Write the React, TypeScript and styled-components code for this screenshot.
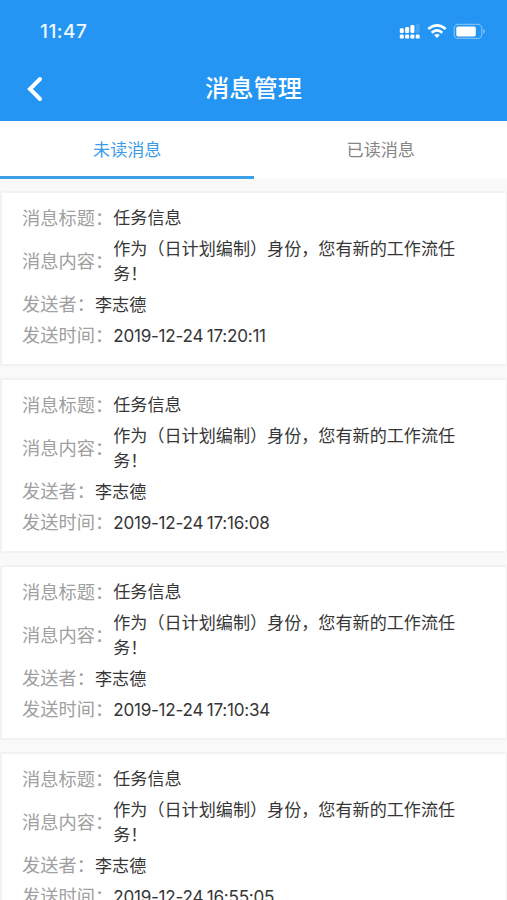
import React from 'react';
import styled, { createGlobalStyle } from 'styled-components';

const GlobalStyle = createGlobalStyle`
  * { box-sizing: border-box; }
  body {
    margin: 0;
    background: #f9f9f9;
    font-family: Inter, "Noto Sans CJK SC", sans-serif;
  }
`;

const Screen = styled.div`
  height: 900px;
  overflow: hidden;
  background: #f9f9f9;
`;

const Header = styled.header`
  height: 121px;
  background: #2495f3;
  color: #fff;
`;

const StatusBar = styled.div`
  height: 62px;
  padding: 0 20px 0 40px;
  display: flex;
  align-items: center;
  justify-content: space-between;
`;

const Clock = styled.span`
  font-size: 19px;
  font-weight: 500;
  letter-spacing: 0.5px;
  color: #eef8ff;
`;

const NavBar = styled.div`
  height: 52px;
  padding: 0 26px;
  display: grid;
  grid-template-columns: 18px 1fr 18px;
  align-items: center;
`;

const BackButton = styled.button`
  display: flex;
  padding: 2px 0 0;
  border: 0;
  background: none;
  color: inherit;
`;

const Title = styled.h1`
  margin: 0;
  padding-top: 1px;
  text-align: center;
  font-size: 24.2px;
  line-height: 36px;
  font-weight: 500;
`;

const Tabs = styled.nav`
  height: 58px;
  display: grid;
  grid-template-columns: 1fr 1fr;
  background: #fff;
`;

const Tab = styled.button<{ $active?: boolean }>`
  padding: 2px 0 0 1px;
  border: 0;
  border-bottom: 3px solid ${(p) => (p.$active ? '#3ba0e6' : 'transparent')};
  background: none;
  font: 400 17.1px/53px Inter, "Noto Sans CJK SC", sans-serif;
  color: ${(p) => (p.$active ? '#3b9be8' : '#858585')};
`;

const List = styled.main`
  padding-top: 12px;
  display: flex;
  flex-direction: column;
  gap: 12px;
`;

const Card = styled.article`
  height: 175px;
  flex: none;
  padding: 10px 46px 0 20px;
  border: 2px solid #f2f2f2;
  border-right-width: 1px;
  border-radius: 2px;
  background: #fff;
`;

const Row = styled.div<{ $tall?: boolean }>`
  height: ${(p) => (p.$tall ? 55 : 31.2)}px;
  display: flex;
  align-items: center;
`;

const Label = styled.span`
  flex: none;
  font-size: 18.25px;
  line-height: 27px;
  color: #a0a0a0;
`;

const Value = styled.span`
  font-size: 17.1px;
  line-height: 24.5px;
  color: #363636;
`;

const Timestamp = styled(Value)`
  letter-spacing: -0.25px;
  word-spacing: -1px;
`;

const StatusIcons = () => (
  <svg width="88" height="20" viewBox="0 0 88 20" fill="#fff">
    {[0, 5.3, 10.6, 15.9].map((x, i) => (
      <React.Fragment key={x}>
        <rect x={x + 0.8} y="13.6" width="4" height="4" rx="1.2" />
        <rect x={x + 0.8} y={[7.2, 6, 4, 3][i]} width="4" height={[4.8, 6, 8, 9][i]} rx="1.2" opacity={i === 3 ? 0.15 : 1} />
      </React.Fragment>
    ))}
    <g fill="none" stroke="#fff" strokeWidth="2.6">
      <path d="M29.3 8.1Q38 0.6 46.7 8.1" />
      <path d="M32.7 11.7Q38 7.2 43.3 11.7" />
    </g>
    <path d="M35.2 14Q38 11.9 40.8 14L38 17.1Z" />
    <rect x="55.2" y="3.4" width="27.6" height="14" rx="4" fill="none" stroke="#fff" strokeOpacity="0.4" strokeWidth="1.2" />
    <rect x="57.3" y="5.5" width="19.5" height="10" rx="1.8" />
    <path d="M84.3 8Q87.6 10.3 84.3 12.7Z" opacity="0.5" />
  </svg>
);

const BackIcon = () => (
  <svg width="18" height="26" viewBox="0 0 18 26" fill="none" stroke="#fff" strokeWidth="4" strokeLinecap="round">
    <path d="M14 3L4 13L14 23" />
  </svg>
);

const times = ['17:20:11', '17:16:08', '17:10:34', '16:55:05'];

export default function App() {
  return (
    <>
      <GlobalStyle />
      <Screen>
        <Header>
          <StatusBar>
            <Clock>11:47</Clock>
            <StatusIcons />
          </StatusBar>
          <NavBar>
            <BackButton aria-label="返回"><BackIcon /></BackButton>
            <Title>消息管理</Title>
          </NavBar>
        </Header>
        <Tabs>
          <Tab $active>未读消息</Tab>
          <Tab>已读消息</Tab>
        </Tabs>
        <List>
          {times.map((time) => (
            <Card key={time}>
              <Row><Label>消息标题：</Label><Value>任务信息</Value></Row>
              <Row $tall>
                <Label>消息内容：</Label>
                <Value>作为（日计划编制）身份，您有新的工作流任务！</Value>
              </Row>
              <Row><Label>发送者：</Label><Value>李志德</Value></Row>
              <Row><Label>发送时间：</Label><Timestamp>2019-12-24 {time}</Timestamp></Row>
            </Card>
          ))}
        </List>
      </Screen>
    </>
  );
}
